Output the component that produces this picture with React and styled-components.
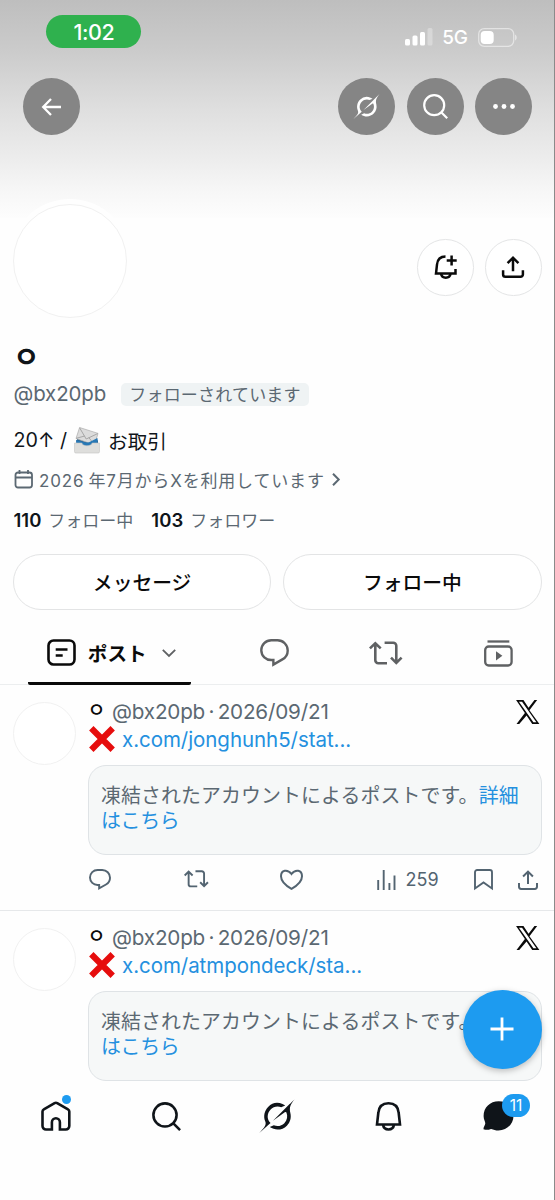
import styled, { createGlobalStyle } from "styled-components";

const GlobalStyle = createGlobalStyle`
  *, *::before, *::after {
    box-sizing: border-box;
  }

  body {
    margin: 0;
    background-color: #fff;
    font-family: Inter, "Noto Sans CJK JP", sans-serif;
    color: #0f1419;
  }

  button {
    font-family: inherit;
    color: inherit;
    background: none;
    border: none;
    padding: 0;
  }

  svg {
    display: block;
    flex-shrink: 0;
    overflow: visible;
  }
`;

const Screen = styled.div`
  position: relative;
  width: 555px;
  height: 1200px;
  display: flex;
  flex-direction: column;
  overflow: hidden;
  background-color: #fefefe;
  border-right: 1px solid #8a8a8a;
`;

const Stroke = styled.svg`
  fill: none;
  stroke: currentColor;
  stroke-width: ${(props) => props.$weight || 2.3};
`;

const Solid = styled.svg`
  fill: currentColor;
`;

/* Banner */

const Banner = styled.header`
  height: 218px;
  flex-shrink: 0;
  background: linear-gradient(#bebebe 0, #cbcbcb 50px, #dfdfdf 110px, #ededed 160px, #f7f7f7 192px, #fdfdfd 218px);
`;

const StatusBar = styled.div`
  display: flex;
  justify-content: space-between;
  height: 78px;
  padding: 15px 37.5px 0 46.4px;
`;

const TimePill = styled.div`
  width: 95px;
  height: 33px;
  border-radius: 17px;
  background-color: #2fb14e;
  color: #fff;
  font-size: 21.5px;
  font-weight: 500;
  letter-spacing: -0.4px;
  line-height: 34px;
  text-align: center;
`;

const StatusIcons = styled.div`
  display: flex;
  align-items: center;
  height: 44px;
  color: #fff;
`;

const Network = styled.span`
  margin: 0 10px 0 9px;
  font-size: 19px;
  font-weight: 500;
  letter-spacing: -0.4px;
`;

const Toolbar = styled.div`
  display: flex;
  gap: 11.5px;
  padding: 0 22px 0 23px;
`;

const RoundButton = styled.button`
  display: flex;
  align-items: center;
  justify-content: center;
  width: ${(props) => (props.$outlined ? "56.5px" : "57px")};
  height: ${(props) => (props.$outlined ? "56.5px" : "57px")};
  border-radius: 50%;
  background-color: ${(props) => (props.$outlined ? "#fff" : "#858585")};
  border: ${(props) => (props.$outlined ? "1.5px solid #e4e5e6" : "none")};
  color: ${(props) => (props.$outlined ? "#0a0a0a" : "#fff")};
  margin-right: ${(props) => (props.$lead ? "auto" : "0")};
`;

/* Profile */

const ProfileTop = styled.div`
  display: flex;
  justify-content: space-between;
  height: 120px;
  padding: 0 12.5px 0 8px;
`;

const AvatarRing = styled.div`
  width: 124px;
  height: 124px;
  margin-top: -19px;
  padding: 5px;
  border-radius: 50%;
  background-color: #fefefe;
`;

const Avatar = styled.div`
  width: ${(props) => props.$size}px;
  height: ${(props) => props.$size}px;
  flex-shrink: 0;
  border-radius: 50%;
  border: 1px solid #f1f1f1;
  background-color: #fff;
`;

const ProfileActions = styled.div`
  display: flex;
  gap: 11.5px;
  padding-top: 21px;
`;

const Profile = styled.section`
  display: flex;
  flex-direction: column;
  padding: 0 13px;
`;

const Name = styled.h1`
  align-self: flex-start;
  margin: 0;
  height: 36px;
  font-family: "Noto Sans CJK KR", sans-serif;
  font-size: 29px;
  font-weight: 700;
  line-height: 34px;
`;

const HandleRow = styled.div`
  display: flex;
  align-items: center;
  height: 38px;
  padding-left: 0.5px;
  color: #5b6872;
  font-size: 20.5px;
  letter-spacing: -0.15px;
`;

const Handle = styled.span`
  width: 107.5px;
`;

const FollowsYou = styled.span`
  width: 188px;
  height: 23px;
  margin-top: 2px;
  border-radius: 5px;
  background-color: #eff3f4;
  font-size: 17px;
  letter-spacing: 0.2px;
  line-height: 24px;
  text-align: center;
`;

const Bio = styled.p`
  display: flex;
  align-items: center;
  gap: 7.5px;
  margin: 0;
  height: 56px;
  padding-left: 0.5px;
  font-size: 19.7px;
  white-space: pre;
`;

const JoinDate = styled.div`
  display: flex;
  align-items: center;
  height: 22px;
  color: #5b6872;
  font-size: 17px;
  white-space: pre;

  & span {
    width: 299px;
    padding-left: 6px;
    letter-spacing: 0.83px;
    word-spacing: -1.5px;
  }
`;

const Stats = styled.div`
  display: flex;
  gap: 18px;
  height: 58px;
  align-items: center;
  padding-left: 0.5px;
  color: #5b6872;
  font-size: 17px;

  & b {
    margin-right: 7px;
    color: #0f1419;
    font-size: 18.5px;
    font-weight: 600;
  }
`;

const ButtonRow = styled.div`
  display: grid;
  grid-template-columns: 1fr 1fr;
  gap: 12px;
  margin: 6px -0.5px 0 0;
`;

const PillButton = styled.button`
  height: 56px;
  padding-bottom: 2px;
  border: 1.5px solid #e3e4e5;
  border-radius: 28px;
  background-color: #fff;
  font-size: 19.8px;
  font-weight: 500;
  color: #0a0a0a;
`;

/* Tabs */

const Tabs = styled.nav`
  display: flex;
  align-items: flex-start;
  height: 75px;
  margin-top: -0.5px;
  flex-shrink: 0;
  border-bottom: 1px solid #eceeef;
  color: #5f6163;
`;

const ActiveTab = styled.button`
  display: flex;
  align-items: center;
  justify-content: center;
  width: 163px;
  height: 75px;
  margin: 0 27px 0 28px;
  padding: 14px 0 0 3.5px;
  color: #0a0a0a;
  border-bottom: 3px solid #0a0a0a;
  border-radius: 2px;
  font-size: 19.6px;
  font-weight: 700;

  & span {
    margin: 0 15px 0 12px;
  }
`;

const Tab = styled.button`
  display: flex;
  align-items: center;
  justify-content: center;
  width: 112px;
  height: 87px;
`;

/* Posts */

const Post = styled.article`
  display: flex;
  flex-shrink: 0;
  height: 226px;
  padding: 17px 12.5px 0 13px;
  gap: 11.5px;
  border-bottom: 1px solid #e6e8ea;
`;

const PostBody = styled.div`
  flex: 1;
  min-width: 0;
`;

const PostHeader = styled.div`
  display: flex;
  align-items: center;
  height: 19px;
  color: #5b6872;
  font-size: 20.7px;
  letter-spacing: -0.2px;
  word-spacing: -2.2px;
  white-space: pre;

  & svg {
    margin: 2px 2px 0 auto;
    color: #0a0a0a;
  }
`;

const PostName = styled.b`
  width: 24.5px;
  height: 28px;
  font-family: "Noto Sans CJK KR", sans-serif;
  font-size: 19.5px;
  font-weight: 500;
  line-height: 24px;
  color: #0a0a0a;
`;

const PostText = styled.div`
  display: flex;
  align-items: center;
  gap: 7.5px;
  height: 37px;
  padding-left: 1px;
  color: #2490df;
  font-size: 20.5px;
  letter-spacing: -0.05px;
`;

const Notice = styled.div`
  height: 90px;
  margin-top: 7.5px;
  padding: 17.5px 0 0 12.5px;
  border: 1px solid #dfe3e6;
  border-radius: 18px;
  background-color: #f6f8f8;
  color: #5b6872;
  font-size: 19.9px;
  line-height: 25.3px;
  white-space: nowrap;
`;

const NoticeLine = styled.div`
  letter-spacing: ${(props) => props.$spacing}px;

  & a {
    color: #2490df;
  }
`;

const Actions = styled.div`
  display: grid;
  grid-template-columns: 95px 96.5px 97px 96.5px 44.5px 22px;
  align-items: center;
  height: 49px;
  padding-left: 1px;
  color: #536471;
  font-size: 18px;
`;

const Views = styled.span`
  display: flex;
  align-items: center;
  gap: 9.5px;
`;

/* Bottom of the screen */

const TabBar = styled.footer`
  position: absolute;
  inset: 1082px 0 0 0;
  display: grid;
  grid-template-columns: repeat(5, 1fr);
  justify-items: center;
  align-items: center;
  padding: 0 0 50px 1px;
  background-color: #fefefe;
`;

const TabBarItem = styled.div`
  position: relative;
  color: #0f1419;
`;

const UnreadDot = styled.i`
  position: absolute;
  top: -6px;
  right: 0;
  width: 9px;
  height: 9px;
  border-radius: 50%;
  background-color: #1d9bf0;
`;

const UnreadCount = styled.span`
  position: absolute;
  top: -7.5px;
  left: 18.5px;
  width: 28.5px;
  height: 23px;
  border-radius: 12px;
  background-color: #1d9bf0;
  color: #fff;
  font-size: 15.5px;
  line-height: 23px;
  text-align: center;
`;

const ComposeButton = styled.button`
  position: absolute;
  top: 989.5px;
  right: 12.5px;
  display: flex;
  align-items: center;
  justify-content: center;
  width: 79px;
  height: 79px;
  border-radius: 50%;
  background-color: #1d9bf0;
  color: #fff;
  box-shadow: 0 2px 6px rgba(0, 0, 0, 0.25);
`;

/* Icons */

const GrokIcon = ({ size }) => (
  <Solid width={size} height={size} viewBox="0.5 0.5 23 23">
    <path d="M9.27 15.29l7.978-5.897c.391-.29.95-.177 1.137.272.98 2.369.542 5.215-1.41 7.169-1.951 1.954-4.667 2.382-7.149 1.406l-2.711 1.257c3.889 2.661 8.611 2.003 11.562-.953 2.341-2.344 3.066-5.539 2.388-8.42l.006.007c-.983-4.232.242-5.924 2.75-9.383.06-.082.12-.164.179-.248l-3.301 3.305v-.01L9.267 15.292M7.623 16.723c-2.792-2.67-2.31-6.801.071-9.184 1.761-1.763 4.647-2.483 7.166-1.425l2.705-1.25a7.808 7.808 0 00-1.829-1A8.975 8.975 0 005.984 5.83c-2.533 2.536-3.33 6.436-1.962 9.764 1.022 2.487-.653 4.246-2.34 6.022-.599.63-1.199 1.259-1.682 1.925l7.62-6.815" />
  </Solid>
);

const SearchIcon = ({ size }) => (
  <Stroke width={size} height={size} viewBox="0 0 25 25" $weight={2.2}>
    <circle cx="11.2" cy="11.2" r="10" />
    <path d="M18.2 18.2l6 6" />
  </Stroke>
);

const ReplyIcon = ({ width, weight }) => (
  <Stroke width={width} height={width * 0.96} viewBox="1.75 2 20.5 19.7" $weight={weight}>
    <path d="M9.756 2.9h4.366c3.99 0 7.23 3.2 7.23 7.2 0 2.65-1.43 5.05-3.75 6.35L11.2 20.1v-3.2H9.9C5.9 17 2.65 13.9 2.65 10c0-3.95 3.2-7.1 7.106-7.1z" />
  </Stroke>
);

const RepostIcon = ({ width, weight }) => (
  <Stroke width={width} height={width * 0.735} viewBox="0 0 34 25" $weight={weight}>
    <path d="M6.3 2v17.3a3 3 0 003 3H18M.9 7.4l5.4-5.2 5.4 5.2M15.6 1.8h8.7a3 3 0 013 3v17.5M22 16.7l5.3 5.2 5.3-5.2" />
  </Stroke>
);

const ShareIcon = ({ width, weight }) => (
  <Stroke width={width} height={width} viewBox="0 0 22 22" $weight={weight}>
    <path d="M11 15.3V1.8M5.6 7.1L11 1.7l5.4 5.4M1.1 14.3v4.2a2.3 2.3 0 002.3 2.3h15.2a2.3 2.3 0 002.3-2.3v-4.2" />
  </Stroke>
);

const XLogo = () => (
  <Solid width="23.5" height="24" viewBox="1.2 2.2 21.7 19.6" preserveAspectRatio="none">
    <path d="M18.244 2.25h2.508l-7.127 8.26 9.202 11.24H16.17l-5.214-6.817L4.19 21.75H1.68l7.73-8.835L1.254 2.25H8.08l4.713 6.231zm-.961 18.12h2.733L6.784 3.626H3.917z" />
  </Solid>
);

const CrossMark = () => (
  <Stroke width="26" height="26" viewBox="0 0 26 26" $weight={6.2} color="#e60d0d">
    <path d="M2.3 2.3l21.4 21.4M23.7 2.3L2.3 23.7" />
  </Stroke>
);

const Envelope = () => (
  <svg width="26" height="27" viewBox="0 0 26 27">
    <path d="M2.5 14L4 10h18l2 4v4h-21z" fill="#2d648f" />
    <path d="M5.6.5L24 6.4 20.5 18 2 11.5z" fill="#dcdcdc" stroke="#aaa" strokeWidth=".7" />
    <path d="M5.6.8L12.2 12 23.7 6.6M2.2 11.3l8.2-2.2M20.2 17.3L15 10.8" fill="none" stroke="#999" strokeWidth=".8" />
    <path d="M2 13c5 1 9 3 13 2.2L23.5 11v8h-21z" fill="#2878b5" />
    <path d="M.5 16h7.3c.8 3.7 9.5 3.7 10.4 0h7.3v8.7c0 .8-.5 1.3-1.3 1.3H1.8c-.8 0-1.3-.5-1.3-1.3z" fill="#dededc" stroke="#c4c4c2" strokeWidth=".6" />
  </svg>
);

const posts = [
  { id: 1, link: "x.com/jonghunh5/stat...", views: 259 },
  { id: 2, link: "x.com/atmpondeck/sta...", views: 259 },
];

function PostItem({ link, views }) {
  return (
    <Post>
      <Avatar $size={63} />
      <PostBody>
        <PostHeader>
          <PostName>ㅇ</PostName>
          <span>@bx20pb · 2026/09/21</span>
          <XLogo />
        </PostHeader>
        <PostText>
          <CrossMark />
          {link}
        </PostText>
        <Notice>
          <NoticeLine $spacing={0.12}>
            凍結されたアカウントによるポストです。<a>詳細</a>
          </NoticeLine>
          <NoticeLine $spacing={-0.3}>
            <a>はこちら</a>
          </NoticeLine>
        </Notice>
        <Actions>
          <ReplyIcon width={22} weight={1.8} />
          <RepostIcon width={25} weight={2.6} />
          <Stroke width="23" height="20" viewBox="0 0 23 20" $weight={2}>
            <path d="M11.5 4C7.5-1.2 1-.1 1 6.2c0 5.2 5.2 9.6 10.5 12.6C16.8 15.8 22 11.4 22 6.2 22-.1 15.5-1.2 11.5 4z" />
          </Stroke>
          <Views>
            <Stroke width="19" height="20" viewBox="0 0 19 20" $weight={1.9}>
              <path d="M1.2 10v10M6.7 0v20M12.4 13v7M17.5 5.5V20" />
            </Stroke>
            {views}
          </Views>
          <Stroke width="19" height="21" viewBox="0 0 19 21" $weight={1.9}>
            <path d="M1 3.2A2.2 2.2 0 013.2 1h12.6A2.2 2.2 0 0118 3.2v16.3l-8.5-6-8.5 6z" />
          </Stroke>
          <ShareIcon width={20} weight={2.2} />
        </Actions>
      </PostBody>
    </Post>
  );
}

export default function App() {
  return (
    <Screen>
      <GlobalStyle />
      <Banner>
        <StatusBar>
          <TimePill>1:02</TimePill>
          <StatusIcons>
            <Solid width="28" height="18" viewBox="0 0 28 18">
              <rect x="0" y="11" width="5" height="6.5" rx="1.5" />
              <rect x="7.5" y="7.5" width="5" height="10" rx="1.5" />
              <rect x="15" y="4" width="5" height="13.5" rx="1.5" />
              <rect x="22.5" y="0" width="5" height="17.5" rx="1.5" opacity=".3" />
            </Solid>
            <Network>5G</Network>
            <Solid width="39" height="19" viewBox="0 0 39 19">
              <rect x=".7" y=".7" width="35" height="17.6" rx="5.5" fill="none" stroke="#fff" strokeWidth="1.3" opacity=".5" />
              <rect x="2.7" y="3" width="13" height="13" rx="4" />
              <path d="M37 6.5c2.3 1 2.3 5 0 6z" opacity=".5" />
            </Solid>
          </StatusIcons>
        </StatusBar>
        <Toolbar>
          <RoundButton $lead>
            <Stroke width="20" height="18" viewBox="0 0 20 18">
              <path d="M19 9H1M9 1L1.200 9l7.800 8" />
            </Stroke>
          </RoundButton>
          <RoundButton>
            <GrokIcon size={25} />
          </RoundButton>
          <RoundButton>
            <SearchIcon size={25} />
          </RoundButton>
          <RoundButton>
            <Solid width="22" height="5" viewBox="0 0 22 5">
              <circle cx="2.5" cy="2.5" r="2.4" />
              <circle cx="11" cy="2.5" r="2.4" />
              <circle cx="19.5" cy="2.5" r="2.4" />
            </Solid>
          </RoundButton>
        </Toolbar>
      </Banner>

      <ProfileTop>
        <AvatarRing>
          <Avatar $size={114} />
        </AvatarRing>
        <ProfileActions>
          <RoundButton $outlined>
            <Stroke width="23" height="25" viewBox="0 0 23 25" $weight={2.5}>
              <path d="M11.5 1.5C6.5 1.5 3.5 4.5 3 9.5L2 18.5h19.5V14M17.6.5v10M12.7 5.5h10M7 18.8c1 5.2 8.6 5.2 9.6 0" />
            </Stroke>
          </RoundButton>
          <RoundButton $outlined>
            <ShareIcon width={22} weight={2.5} />
          </RoundButton>
        </ProfileActions>
      </ProfileTop>

      <Profile>
        <Name>ㅇ</Name>
        <HandleRow>
          <Handle>@bx20pb</Handle>
          <FollowsYou>フォローされています</FollowsYou>
        </HandleRow>
        <Bio>
          20↑ /
          <Envelope />
          お取引
        </Bio>
        <JoinDate>
          <Stroke width="20" height="19" viewBox="0 0 20 19" $weight={1.8}>
            <rect x="2.5" y="2.5" width="16.5" height="15" rx="2.5" />
            <path d="M2.5 7.5H19M6.5 0v4M15 0v4" />
          </Stroke>
          <span>2026 年7月からXを利用しています</span>
          <Stroke width="8" height="13" viewBox="0 0 8 13" $weight={2}>
            <path d="M1 .8l5.7 5.7L1 12.2" />
          </Stroke>
        </JoinDate>
        <Stats>
          <span>
            <b>110</b>フォロー中
          </span>
          <span>
            <b>103</b>フォロワー
          </span>
        </Stats>
        <ButtonRow>
          <PillButton>メッセージ</PillButton>
          <PillButton>フォロー中</PillButton>
        </ButtonRow>
      </Profile>

      <Tabs>
        <ActiveTab>
          <Stroke width="29" height="27" viewBox="0 0 29 27" $weight={2.6}>
            <rect x="1.5" y="1.5" width="26" height="24" rx="5" />
            <path d="M8.7 10.5h11.8M8.7 16.5h7" />
          </Stroke>
          <span>ポスト</span>
          <Stroke width="14" height="8" viewBox="0 0 14 8" $weight={1.8} color="#5f6163">
            <path d="M.8.8L7 7 13.2.8" />
          </Stroke>
        </ActiveTab>
        <Tab>
          <ReplyIcon width={29} weight={1.7} />
        </Tab>
        <Tab>
          <RepostIcon width={34} weight={2.6} />
        </Tab>
        <Tab>
          <Stroke width="29" height="27" viewBox="0 0 29 27">
            <rect x="1.2" y="6.5" width="26.4" height="19" rx="3.5" />
            <path d="M3.5 1.5h21.8" />
            <path d="M12 11.2v9.2l6.4-4.6z" fill="currentColor" stroke="none" />
          </Stroke>
        </Tab>
      </Tabs>

      {posts.map((post) => (
        <PostItem key={post.id} link={post.link} views={post.views} />
      ))}

      <TabBar>
        <TabBarItem>
          <Stroke width="30" height="30" viewBox="0 0 30 30" $weight={2.6}>
            <path d="M13.6 2.1a2.5 2.5 0 012.6 0L27 8.4a2.5 2.5 0 011.3 2.2V25a3.5 3.5 0 01-3.5 3.5h-5.9v-7.2a4 4 0 00-8 0v7.2H5A3.5 3.5 0 011.5 25V10.6a2.5 2.5 0 011.3-2.2z" />
          </Stroke>
          <UnreadDot />
        </TabBarItem>
        <TabBarItem>
          <SearchIcon size={29} />
        </TabBarItem>
        <TabBarItem>
          <GrokIcon size={34} />
        </TabBarItem>
        <TabBarItem>
          <Stroke width="27" height="29" viewBox="0 0 27 29" $weight={2.6}>
            <path d="M13.5 1.3c-6 0-9.7 3.7-10.2 9.7L2 22.5h23L23.7 11C23.2 5 19.5 1.3 13.5 1.3zM8 22.8c1 6.2 10 6.2 11 0" />
          </Stroke>
        </TabBarItem>
        <TabBarItem>
          <Solid width="31" height="30" viewBox="0 0 31 30">
            <path d="M15.7.3C7 .3.6 6.5.6 15c0 3.6 1.7 5.5 1.7 7.3 0 1.8-2 3.7-1.8 5.9 3.3 1.3 5.3.4 7.7-.3 2.3.8 4.5 1.5 7.2 1.5 8.7 0 15.1-6.3 15.1-14.7S24.1.3 15.7.3z" />
          </Solid>
          <UnreadCount>11</UnreadCount>
        </TabBarItem>
      </TabBar>

      <ComposeButton>
        <Stroke width="24" height="24" viewBox="0 0 24 24" $weight={2.8}>
          <path d="M12 .5v23M.5 12h23" />
        </Stroke>
      </ComposeButton>
    </Screen>
  );
}
